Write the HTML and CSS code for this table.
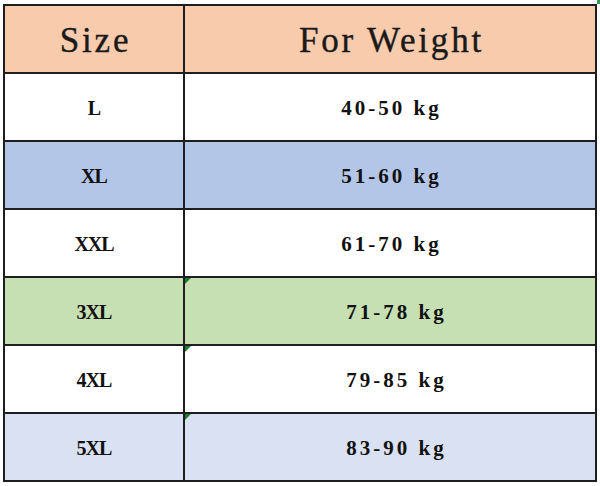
FILE: index.html
```html
<!DOCTYPE html>
<html lang="en">
<head>
<meta charset="utf-8">
<title>Size chart</title>
<link rel="stylesheet" href="styles.css">
</head>
<body>
<div class="sheet">
  <div class="handle"></div>
  <div class="chart">
    <div class="cell head">Size</div>
    <div class="cell head">For Weight</div>

    <div class="cell size">L</div>
    <div class="cell">40-50 kg</div>

    <div class="cell size blue">XL</div>
    <div class="cell blue">51-60 kg</div>

    <div class="cell size">XXL</div>
    <div class="cell">61-70 kg</div>

    <div class="cell size green">3XL</div>
    <div class="cell green flag shift">71-78 kg</div>

    <div class="cell size">4XL</div>
    <div class="cell flag shift">79-85 kg</div>

    <div class="cell size pale">5XL</div>
    <div class="cell pale flag shift">83-90 kg</div>
  </div>
</div>
</body>
</html>
```

FILE: styles.css
```css
html, body {
  margin: 0;
  padding: 0;
  background: #ffffff;
}

.sheet {
  position: relative;
  width: 600px;
  height: 486px;
  padding: 4px 0 0 3px;
  box-sizing: border-box;
}

.handle {
  position: absolute;
  top: 0;
  right: 0;
  width: 3px;
  height: 4px;
  background: #3a9a5a;
}

.chart {
  width: 594px;
  display: grid;
  grid-template-columns: 178px 410px;
  grid-auto-rows: 66px;
  gap: 2px;
  padding: 2px;
  box-sizing: border-box;
  background: #1e1e1e;
}

.cell {
  position: relative;
  display: flex;
  align-items: center;
  justify-content: center;
  background: #ffffff;
  color: #111111;
  font-family: "Liberation Serif", "DejaVu Serif", serif;
  font-weight: 700;
  font-size: 21px;
  letter-spacing: 3px;
  padding-top: 3px;
  padding-left: 3px;
  box-sizing: border-box;
}

.size {
  font-size: 20px;
  letter-spacing: -1px;
  padding-left: 0;
}

.head {
  background: #f8cbad;
  font-weight: 400;
  font-size: 35px;
  letter-spacing: 2.8px;
  padding-top: 4px;
  padding-left: 3px;
  color: #1a1a1a;
  -webkit-text-stroke: 0.4px #1a1a1a;
}

.blue {
  background: #b4c6e7;
}

.green {
  background: #c6e0b4;
}

.pale {
  background: #d9e1f2;
}

.shift {
  padding-left: 13px;
}

.flag::before {
  content: "";
  position: absolute;
  top: 0;
  left: 0;
  width: 0;
  height: 0;
  border-top: 6px solid #1f7a2e;
  border-right: 6px solid transparent;
}
```
